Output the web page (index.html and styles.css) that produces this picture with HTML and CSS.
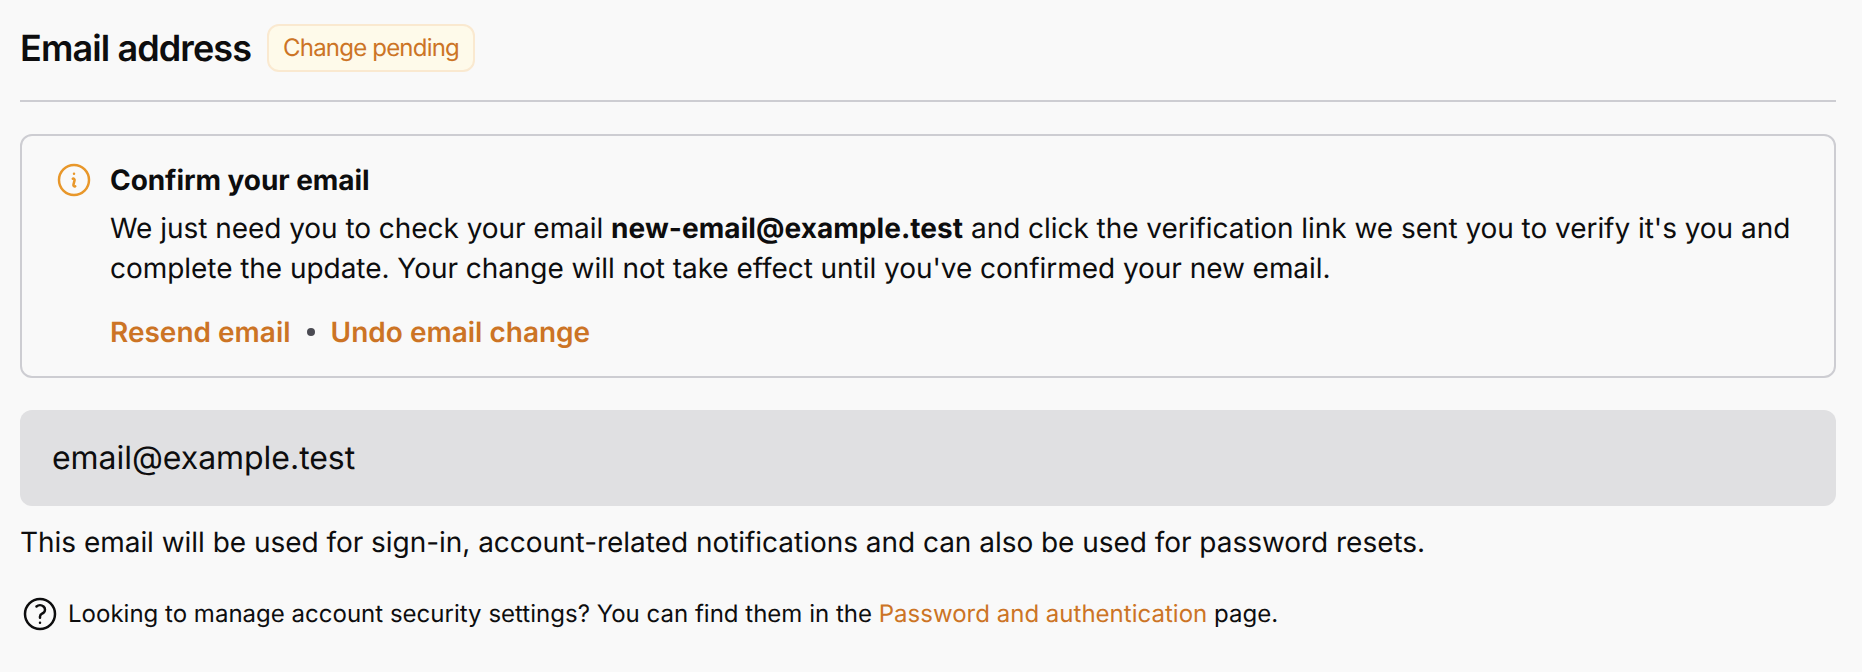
FILE: index.html
```html
<!DOCTYPE html>
<html lang="en">
<head>
<meta charset="utf-8">
<title>Email address</title>
<link rel="stylesheet" href="styles.css">
</head>
<body>
<main class="settings">
  <header class="section-header">
    <h1 class="section-title">Email address</h1>
    <span class="badge">Change pending</span>
  </header>
  <section class="notice">
    <svg class="icon icon-info" viewBox="0 0 24 24"><path d="M11.25 11.25l.041-.02a.75.75 0 011.063.852l-.708 2.836a.75.75 0 001.063.853l.041-.021M21 12a9 9 0 11-18 0 9 9 0 0118 0zm-9-3.75h.008v.008H12V8.25z"/></svg>
    <div class="notice-body">
      <h2 class="notice-title">Confirm your email</h2>
      <p class="notice-text">We just need you to check your email <strong>new-email@example.test</strong> and click the verification link we sent you to verify it's you and complete the update. Your change will not take effect until you've confirmed your new email.</p>
      <div class="notice-actions"><a class="resend">Resend email</a><span class="dot"></span><a class="undo">Undo email change</a></div>
    </div>
  </section>
  <div class="field">email@example.test</div>
  <p class="hint">This email will be used for sign-in, account-related notifications and can also be used for password resets.</p>
  <div class="security">
    <svg class="icon" viewBox="0 0 24 24"><path d="M9.879 7.519c1.171-1.025 3.071-1.025 4.242 0 1.172 1.025 1.172 2.687 0 3.712-.203.179-.43.326-.67.442-.745.361-1.45.999-1.45 1.827v.75M21 12a9 9 0 11-18 0 9 9 0 0118 0zm-9 5.25h.008v.008H12v-.008z"/></svg>
    <p class="security-text">Looking to manage account security settings? You can find them in the <a class="link">Password and authentication</a> page.</p>
  </div>
</main>
</body>
</html>
```
FILE: styles.css
```css
* { box-sizing: border-box; margin: 0; }
body {
  background: #f9f9f9;
  color: #0d0d0e;
  font: 400 28px/40px Inter, sans-serif;
  font-variation-settings: "opsz" 14;
  text-rendering: geometricPrecision;
}
.settings { padding: 24px 26px 0 20px; }
.section-header {
  display: flex;
  align-items: center;
  height: 78px;
  padding-bottom: 28px;
  border-bottom: 2px solid #cdcdd2;
}
.section-title { font-size: 36px; font-weight: 600; letter-spacing: -0.9px; }
.badge {
  display: flex;
  align-items: center;
  height: 48px;
  margin-left: 16px;
  padding: 0 14px;
  border: 2px solid #fae9d0;
  border-radius: 12px;
  background: #fefaea;
  color: #cc7425;
  font-size: 24px;
  letter-spacing: -0.8px;
}
.notice {
  display: flex;
  gap: 16px;
  margin-top: 32px;
  padding: 24px 32px;
  border: 2px solid #cdcdd2;
  border-radius: 12px;
}
.icon {
  flex: none;
  width: 40px;
  height: 40px;
  fill: none;
  stroke: currentColor;
  stroke-width: 1.5;
  stroke-linecap: round;
  stroke-linejoin: round;
}
.icon-info { color: #e8972a; }
.notice-title { font-size: 28px; font-weight: 700; letter-spacing: -0.07px; }
.notice-text { margin-top: 8px; letter-spacing: -0.045px; }
.notice-text strong { letter-spacing: 0.06px; }
.notice-actions {
  display: flex;
  align-items: center;
  margin-top: 24px;
  color: #cc7425;
  font-weight: 600;
}
.dot { width: 8px; height: 8px; margin: 0 16px; border-radius: 50%; background: #4b4b53; }
.field {
  display: flex;
  align-items: center;
  height: 96px;
  margin-top: 32px;
  padding: 0 32px;
  border-radius: 12px;
  background: #e0e0e2;
  font-size: 32px;
  letter-spacing: -0.04px;
}
.hint { margin-top: 16px; letter-spacing: -0.033px; }
.security { display: flex; gap: 8px; margin-top: 32px; }
.security-text { font-size: 24px; line-height: 39px; letter-spacing: 0.012px; }
.link { color: #cc7425; }
```
